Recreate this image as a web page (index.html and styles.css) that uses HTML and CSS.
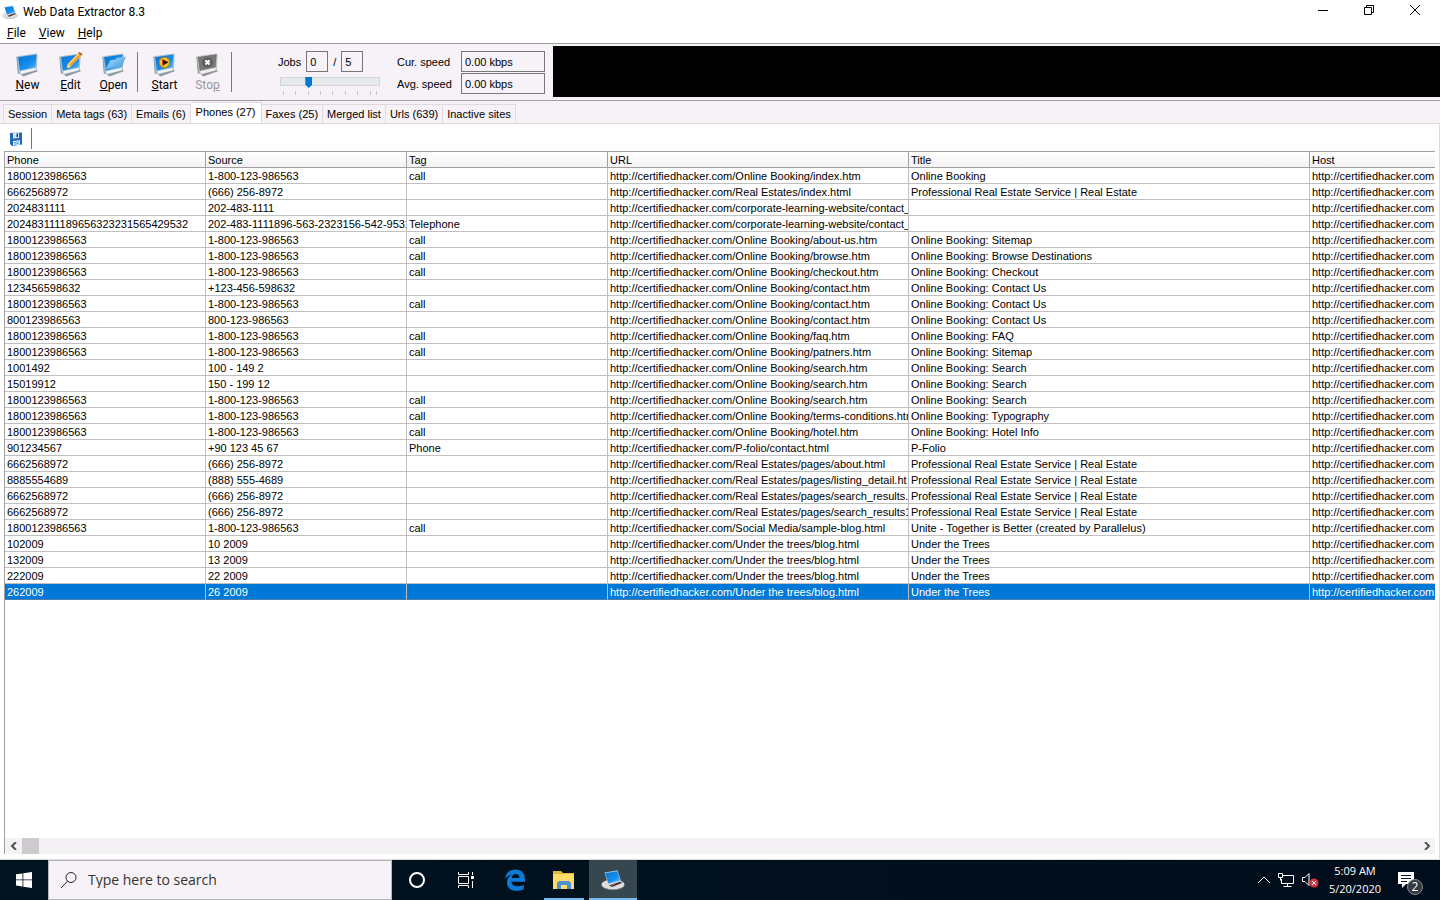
FILE: index.html
```html
<!DOCTYPE html>
<html lang="en">
  <head>
    <meta charset="utf-8" />
    <meta name="viewport" content="width=device-width, initial-scale=1.0" />
    <title>Web Data Extractor 8.3</title>
    <link rel="stylesheet" href="styles.css">
  </head>
  <body>
    <!-- Shared icon shapes -->
    <svg class="defs" aria-hidden="true">
      <defs>
        <linearGradient id="screen" x1="0" y1="0" x2="1" y2="1">
          <stop offset="0" stop-color="#0873d0" />
          <stop offset="0.6" stop-color="#168eee" />
          <stop offset="1" stop-color="#58bcff" />
        </linearGradient>
        <linearGradient id="folder" x1="0" y1="0" x2="1" y2="1">
          <stop offset="0" stop-color="#b8e2fa" />
          <stop offset="1" stop-color="#2c93e0" />
        </linearGradient>
        <symbol id="monitor" viewBox="0 0 24 24">
          <path d="M4 20l16-3.500 2 2-14 5z" fill="#8d98a3" />
          <path d="M2 4l19-2.500.8 1.500-1 14.500-15 4-2.500-1z" fill="#a9bfd0" />
          <path d="M2 4l1.700 17.200-1-.7L1.400 5z" fill="#6f90ab" />
          <path d="M5 18.500l15-3.200-.2 2.200L5.500 21.200z" fill="#eef4f8" />
          <path d="M3 5l17.500-2.500-.8 12L4.700 17.800z" fill="url(#screen)" />
        </symbol>
        <symbol id="app" viewBox="0 0 24 24">
          <ellipse cx="12" cy="16.500" rx="11.500" ry="5" fill="#e0dddb" />
          <path d="M.5 16.500c2 6.500 21 6.500 23 0 0 7.500-23 7.500-23 0z" fill="#98969b" />
          <path d="M3.500 4.500l13-2.200 3.500 10.500-13 3.400z" fill="#9acbef" />
          <path d="M4.200 5.300l12-2 3 9-11.700 3z" fill="url(#screen)" />
          <path d="M8 17.500l11-3.700 2.500 1-10.500 4.200z" fill="#35343b" />
          <path d="M10 17.500l4-1.500" stroke="#d4473c" />
        </symbol>
      </defs>
    </svg>

    <main class="window">
      <header class="title-bar">
        <svg class="app-icon"><use href="#app" /></svg>
        <h1>Web Data Extractor 8.3</h1>
        <div class="window-buttons">
          <button aria-label="Minimize"><svg viewBox="0 0 12 12"><path d="M1 6.500h10" /></svg></button>
          <button aria-label="Restore"><svg viewBox="0 0 12 12"><path d="M1.500 3.500h7v7h-7zM3.500 3.500v-2h7v7h-2" /></svg></button>
          <button aria-label="Close"><svg viewBox="0 0 12 12"><path d="M1 1l10 10M11 1L1 11" /></svg></button>
        </div>
      </header>

      <nav class="menu">
        <a href="#file"><u>F</u>ile</a>
        <a href="#view"><u>V</u>iew</a>
        <a href="#help"><u>H</u>elp</a>
      </nav>

      <section class="toolbar">
        <div class="actions">
          <button>
            <svg><use href="#monitor" /></svg>
            <span><u>N</u>ew</span>
          </button>
          <button>
            <svg viewBox="0 0 24 24">
              <use href="#monitor" />
              <path d="M8 16l1.500-4.500L19.500 1l3 2.500-10.500 11z" fill="#f3a02c" />
              <path d="M9.500 11.500L19.500 1l1 .8L10.700 12.500z" fill="#ffcf70" />
              <path d="M8 16l1.500-4.500 2.500 3z" fill="#f5dfb5" />
              <path d="M8 16l.6-1.700 1 1z" fill="#493420" />
              <path d="M19.500 1l1.200-1.200 3 2.400-1.200 1.300z" fill="#a06a42" />
            </svg>
            <span><u>E</u>dit</span>
          </button>
          <button>
            <svg viewBox="0 0 24 24">
              <use href="#monitor" />
              <path d="M4.500 16.500L9 8l5-.7 1.300-1.800L24 4.500 20 14z" fill="url(#folder)" />
            </svg>
            <span><u>O</u>pen</span>
          </button>
        </div>
        <div class="actions run">
          <button>
            <svg viewBox="0 0 24 24">
              <use href="#monitor" />
              <ellipse cx="12" cy="10" rx="5" ry="5" fill="#f7c52c" stroke="#b78018" />
              <path d="M10 7l6 2.800-5.600 3.200z" fill="#35120b" />
              <path d="M10 7l.4 6" stroke="#d83a20" />
            </svg>
            <span><u>S</u>tart</span>
          </button>
          <button disabled>
            <svg viewBox="0 0 24 24">
              <g class="gray">
                <use href="#monitor" />
                <path d="M3 5l17.500-2.500-.8 12L4.700 17.800z" fill="#777" />
                <circle cx="12" cy="10" r="5" fill="#5c5c5c" />
                <path d="M10 8l4 4M14 8l-4 4" stroke="#fff" stroke-width="2" />
              </g>
            </svg>
            <span>Sto<u>p</u></span>
          </button>
        </div>

        <div class="jobs">
          <div class="jobs-count">
            <label for="jobs">Jobs</label>
            <input id="jobs" type="text" value="0" />
            <span>/</span>
            <input type="text" value="5" aria-label="Maximum jobs" />
          </div>
          <input class="slider" type="range" min="1" max="16" value="5" aria-label="Job limit" />
          <svg class="ticks" viewBox="0 0 100 4">
            <path d="M3.500 0v4M15.500 0v4M28.500 0v4M40.500 0v4M52.500 0v4M65.500 0v4M77.500 0v4M90.500 0v4M96.500 0v4" />
          </svg>
        </div>

        <div class="speeds">
          <label for="cur">Cur. speed</label>
          <input id="cur" type="text" value="0.00 kbps" />
          <label for="avg">Avg. speed</label>
          <input id="avg" type="text" value="0.00 kbps" />
        </div>
        <div class="graph"></div>
      </section>

      <nav class="tabs">
        <button>Session</button>
        <button>Meta tags (63)</button>
        <button>Emails (6)</button>
        <button class="active">Phones (27)</button>
        <button>Faxes (25)</button>
        <button>Merged list</button>
        <button>Urls (639)</button>
        <button>Inactive sites</button>
      </nav>

      <section class="panel">
        <div class="panel-tools">
          <button aria-label="Save">
            <svg viewBox="0 0 14 14">
              <path d="M1 1l12-.5v12L3 14l-2-2z" fill="#2467b5" />
              <path d="M4 .8l6-.3v5.500L4 6.500z" fill="#d5e8f8" />
              <path d="M7.500 1.500l1.500-.1v3.600l-1.500.2z" fill="#173f7c" />
              <path d="M4 9l7-.8v4.500L4 13.500z" fill="#eaf5fc" />
              <path d="M5 10.500l5-.6M5 12.200l5-.6" stroke="#4ca5df" />
            </svg>
          </button>
        </div>

        <div class="grid">
          <table>
            <colgroup>
              <col class="col-phone" />
              <col class="col-source" />
              <col class="col-tag" />
              <col class="col-url" />
              <col class="col-title" />
              <col />
            </colgroup>
            <thead>
              <tr><th>Phone</th><th>Source</th><th>Tag</th><th>URL</th><th>Title</th><th>Host</th></tr>
            </thead>
            <tbody>
              <tr><td>1800123986563</td><td>1-800-123-986563</td><td>call</td><td>http://certifiedhacker.com/Online Booking/index.htm</td><td>Online Booking</td><td>http://certifiedhacker.com</td></tr>
              <tr><td>6662568972</td><td>(666) 256-8972</td><td></td><td>http://certifiedhacker.com/Real Estates/index.html</td><td>Professional Real Estate Service | Real Estate</td><td>http://certifiedhacker.com</td></tr>
              <tr><td>2024831111</td><td>202-483-1111</td><td></td><td>http://certifiedhacker.com/corporate-learning-website/contact_</td><td></td><td>http://certifiedhacker.com</td></tr>
              <tr><td>202483111189656323231565429532</td><td>202-483-1111896-563-2323156-542-9532</td><td>Telephone</td><td>http://certifiedhacker.com/corporate-learning-website/contact_</td><td></td><td>http://certifiedhacker.com</td></tr>
              <tr><td>1800123986563</td><td>1-800-123-986563</td><td>call</td><td>http://certifiedhacker.com/Online Booking/about-us.htm</td><td>Online Booking: Sitemap</td><td>http://certifiedhacker.com</td></tr>
              <tr><td>1800123986563</td><td>1-800-123-986563</td><td>call</td><td>http://certifiedhacker.com/Online Booking/browse.htm</td><td>Online Booking: Browse Destinations</td><td>http://certifiedhacker.com</td></tr>
              <tr><td>1800123986563</td><td>1-800-123-986563</td><td>call</td><td>http://certifiedhacker.com/Online Booking/checkout.htm</td><td>Online Booking: Checkout</td><td>http://certifiedhacker.com</td></tr>
              <tr><td>123456598632</td><td>+123-456-598632</td><td></td><td>http://certifiedhacker.com/Online Booking/contact.htm</td><td>Online Booking: Contact Us</td><td>http://certifiedhacker.com</td></tr>
              <tr><td>1800123986563</td><td>1-800-123-986563</td><td>call</td><td>http://certifiedhacker.com/Online Booking/contact.htm</td><td>Online Booking: Contact Us</td><td>http://certifiedhacker.com</td></tr>
              <tr><td>800123986563</td><td>800-123-986563</td><td></td><td>http://certifiedhacker.com/Online Booking/contact.htm</td><td>Online Booking: Contact Us</td><td>http://certifiedhacker.com</td></tr>
              <tr><td>1800123986563</td><td>1-800-123-986563</td><td>call</td><td>http://certifiedhacker.com/Online Booking/faq.htm</td><td>Online Booking: FAQ</td><td>http://certifiedhacker.com</td></tr>
              <tr><td>1800123986563</td><td>1-800-123-986563</td><td>call</td><td>http://certifiedhacker.com/Online Booking/patners.htm</td><td>Online Booking: Sitemap</td><td>http://certifiedhacker.com</td></tr>
              <tr><td>1001492</td><td>100 - 149 2</td><td></td><td>http://certifiedhacker.com/Online Booking/search.htm</td><td>Online Booking: Search</td><td>http://certifiedhacker.com</td></tr>
              <tr><td>15019912</td><td>150 - 199 12</td><td></td><td>http://certifiedhacker.com/Online Booking/search.htm</td><td>Online Booking: Search</td><td>http://certifiedhacker.com</td></tr>
              <tr><td>1800123986563</td><td>1-800-123-986563</td><td>call</td><td>http://certifiedhacker.com/Online Booking/search.htm</td><td>Online Booking: Search</td><td>http://certifiedhacker.com</td></tr>
              <tr><td>1800123986563</td><td>1-800-123-986563</td><td>call</td><td>http://certifiedhacker.com/Online Booking/terms-conditions.htm</td><td>Online Booking: Typography</td><td>http://certifiedhacker.com</td></tr>
              <tr><td>1800123986563</td><td>1-800-123-986563</td><td>call</td><td>http://certifiedhacker.com/Online Booking/hotel.htm</td><td>Online Booking: Hotel Info</td><td>http://certifiedhacker.com</td></tr>
              <tr><td>901234567</td><td>+90 123 45 67</td><td>Phone</td><td>http://certifiedhacker.com/P-folio/contact.html</td><td>P-Folio</td><td>http://certifiedhacker.com</td></tr>
              <tr><td>6662568972</td><td>(666) 256-8972</td><td></td><td>http://certifiedhacker.com/Real Estates/pages/about.html</td><td>Professional Real Estate Service | Real Estate</td><td>http://certifiedhacker.com</td></tr>
              <tr><td>8885554689</td><td>(888) 555-4689</td><td></td><td>http://certifiedhacker.com/Real Estates/pages/listing_detail.ht</td><td>Professional Real Estate Service | Real Estate</td><td>http://certifiedhacker.com</td></tr>
              <tr><td>6662568972</td><td>(666) 256-8972</td><td></td><td>http://certifiedhacker.com/Real Estates/pages/search_results.</td><td>Professional Real Estate Service | Real Estate</td><td>http://certifiedhacker.com</td></tr>
              <tr><td>6662568972</td><td>(666) 256-8972</td><td></td><td>http://certifiedhacker.com/Real Estates/pages/search_results1</td><td>Professional Real Estate Service | Real Estate</td><td>http://certifiedhacker.com</td></tr>
              <tr><td>1800123986563</td><td>1-800-123-986563</td><td>call</td><td>http://certifiedhacker.com/Social Media/sample-blog.html</td><td>Unite - Together is Better (created by Parallelus)</td><td>http://certifiedhacker.com</td></tr>
              <tr><td>102009</td><td>10 2009</td><td></td><td>http://certifiedhacker.com/Under the trees/blog.html</td><td>Under the Trees</td><td>http://certifiedhacker.com</td></tr>
              <tr><td>132009</td><td>13 2009</td><td></td><td>http://certifiedhacker.com/Under the trees/blog.html</td><td>Under the Trees</td><td>http://certifiedhacker.com</td></tr>
              <tr><td>222009</td><td>22 2009</td><td></td><td>http://certifiedhacker.com/Under the trees/blog.html</td><td>Under the Trees</td><td>http://certifiedhacker.com</td></tr>
              <tr class="selected"><td>262009</td><td>26 2009</td><td></td><td>http://certifiedhacker.com/Under the trees/blog.html</td><td>Under the Trees</td><td>http://certifiedhacker.com</td></tr>
            </tbody>
          </table>
          <div class="scrollbar">
            <button aria-label="Scroll left"><svg viewBox="0 0 8 8"><path d="M6 0L2 4l4 4" /></svg></button>
            <div class="thumb"></div>
            <button aria-label="Scroll right"><svg viewBox="0 0 8 8"><path d="M2 0l4 4-4 4" /></svg></button>
          </div>
        </div>
      </section>
    </main>

    <footer class="taskbar">
      <button class="start" aria-label="Start">
        <svg viewBox="0 0 16 16"><path d="M0 2.300l6.500-.9v6.100H0zM7.300 1.300L16 0v7.500H7.300zM0 8.300h6.500v6.200L0 13.600zM7.300 8.300H16V16l-8.700-1.300z" fill="#fff" /></svg>
      </button>
      <label class="search">
        <svg viewBox="0 0 18 18"><circle cx="11" cy="6.500" r="5" /><path d="M7.500 10.200L1 17" /></svg>
        <input type="text" placeholder="Type here to search" />
      </label>
      <button aria-label="Cortana">
        <svg class="icon-m" viewBox="0 0 18 18"><circle cx="9" cy="9" r="7" fill="none" stroke="#fff" stroke-width="2" /></svg>
      </button>
      <button aria-label="Task view">
        <svg class="icon-m" viewBox="0 0 18 18"><path d="M1.500 1v2.500h10V1M1.500 17v-2.500h10V17M1.500 5.500h10v7h-10zM15.500 1v3M15.500 10v7" fill="none" stroke="#fff" /><path d="M14 5h3v3h-3z" fill="#fff" /></svg>
      </button>
      <button aria-label="Edge">
        <svg class="icon-l" viewBox="0 0 24 24"><path d="M2 11C3 4.500 7 1.500 12.500 1.500 18.500 1.500 22 5.500 22 11v2.700H8.500c.2 3.300 3 4.600 6.200 4.600 2.300 0 4.300-.6 6-1.600v4.600c-2 1-4.300 1.500-7 1.500C7.500 22.800 4 19.500 4 14.500c0-3.500 1.800-6.300 5-7.700C6 7 3.800 8.500 2 11zM8.700 10h7.800c0-2.500-1.300-4-3.700-4-2.300 0-3.700 1.500-4.100 4z" fill="#0e7ad8" fill-rule="evenodd" /></svg>
      </button>
      <button aria-label="File Explorer">
        <span class="open"><svg class="icon-l" viewBox="0 0 24 24"><path d="M1 3h8l2 2h11v16H1z" fill="#e8b63a" /><path d="M1 6h21v15H1z" fill="#ffdc68" /><path d="M5 21v-6l2-2h10l2 2v6h-4v-4H9v4z" fill="#4b91d4" /></svg></span>
      </button>
      <button aria-label="Web Data Extractor">
        <span class="open current"><svg class="icon-l"><use href="#app" /></svg></span>
      </button>
      <div class="tray">
        <svg class="icon-s" viewBox="0 0 14 14"><path d="M1 10l6-6 6 6" fill="none" stroke="#fff" /></svg>
        <svg class="icon-m" viewBox="0 0 18 18"><path d="M6 4.500h10.500v8H4.500V8M10.500 12.500v3M6.500 15.500h8M1.500 2.500h4v4h-4zM3.500 6.500v3" fill="none" stroke="#fff" /></svg>
        <svg class="icon-m" viewBox="0 0 18 18"><path d="M1.500 6.500H4l4-4v12l-4-4H1.500z" fill="none" stroke="#fff" /><circle cx="13" cy="12" r="4.500" fill="#d43440" /><path d="M11 10l4 4M15 10l-4 4" stroke="#fff" /></svg>
        <div class="clock"><span>5:09 AM</span><span>5/20/2020</span></div>
        <button class="notifications" aria-label="Notifications">
          <svg viewBox="0 0 18 18"><path d="M1 1h16v12H9l-4 4v-4H1z" fill="#fff" /><path d="M4 4.500h10M4 7.500h10M4 10.500h6" stroke="#05111c" /></svg>
          <span class="badge">2</span>
        </button>
      </div>
    </footer>
  </body>
</html>
```

FILE: styles.css
```css
:root {
  --face: #f6f2f7;
  --line: #a0a0a0;
  --grid: #c0c0c0;
  --blue: #0078d7;
}

* {
  box-sizing: border-box;
  margin: 0;
  padding: 0;
}

body {
  display: flex;
  flex-direction: column;
  height: 100vh;
  overflow: hidden;
  background: #fff;
  color: #000;
  font-family: "Liberation Sans", Arial, sans-serif;
  font-size: 11px;
  line-height: 16px;
}

button,
input {
  font: inherit;
  color: inherit;
  border: none;
  background: none;
}

a {
  color: inherit;
  text-decoration: none;
}

svg {
  display: block;
  flex: none;
}

.defs {
  position: absolute;
  width: 0;
  height: 0;
}

.window {
  flex: 1;
  min-height: 0;
  display: flex;
  flex-direction: column;
}

/* Title bar and menu */
.title-bar,
.menu,
.actions {
  font-family: Roboto, "Liberation Sans", sans-serif;
  font-size: 12px;
}

.title-bar {
  display: flex;
  align-items: center;
  height: 24px;
  padding: 0 2px;
}

.title-bar h1 {
  margin-left: 5px;
  font-size: 12px;
  font-weight: 400;
}

.app-icon {
  width: 16px;
  height: 16px;
}

.window-buttons {
  display: flex;
  margin-left: auto;
}

.window-buttons button {
  display: flex;
  justify-content: center;
  width: 46px;
  padding-bottom: 4px;
}

.window-buttons svg {
  width: 12px;
  height: 12px;
  fill: none;
  stroke: #000;
}

.menu {
  display: flex;
  gap: 13px;
  height: 20px;
  padding: 1px 7px;
  border-bottom: 1px solid var(--line);
}

/* Toolbar */
.toolbar {
  display: flex;
  height: 57px;
  background: var(--face);
  border-bottom: 1px solid var(--line);
}

.actions {
  display: flex;
  align-self: center;
  height: 40px;
  padding: 0 2px 0 6px;
  border-right: 1px solid #777;
}

.actions.run {
  padding-left: 5px;
}

.actions button {
  display: flex;
  flex-direction: column;
  align-items: center;
  width: 43px;
}

.actions svg {
  width: 25px;
  height: 25px;
}

.actions button:disabled {
  color: #9a979c;
}

.gray {
  filter: grayscale(1);
}

.jobs {
  width: 104px;
  margin-left: 46px;
  padding-top: 7px;
}

.jobs-count {
  display: flex;
  align-items: center;
  gap: 5px;
}

.jobs-count input {
  width: 22px;
  height: 21px;
  padding: 0 3px;
  border: 1px solid #777;
}

.slider {
  display: block;
  appearance: none;
  width: 100px;
  height: 9px;
  margin: 5px 0 5px 2px;
  background: #e7eaea;
  border: 1px solid #d6d6d6;
}

.slider::-webkit-slider-thumb {
  appearance: none;
  width: 7px;
  height: 11px;
  margin-top: 2px;
  background: var(--blue);
  clip-path: polygon(0 0, 100% 0, 100% 70%, 50% 100%, 0 70%);
}

.ticks {
  width: 100px;
  height: 4px;
  margin-left: 2px;
  stroke: #c4c4c4;
}

.speeds {
  display: grid;
  grid-template-columns: 64px 84px;
  align-content: start;
  align-items: center;
  gap: 1px 0;
  margin-left: 15px;
  padding-top: 7px;
}

.speeds input {
  width: 84px;
  height: 21px;
  padding: 0 3px;
  border: 1px solid #777;
}

.graph {
  flex: 1;
  height: 51px;
  margin: 2px 0 0 8px;
  background: #000;
}

/* Tabs */
.tabs {
  display: flex;
  height: 22px;
  padding: 3px 3px 0;
  background: var(--face);
}

.tabs button {
  padding: 0 4px;
  border: 1px solid #dedade;
  border-left: none;
  border-bottom: none;
}

.tabs button:first-child {
  border-left: 1px solid #dedade;
}

.tabs .active {
  margin-top: -2px;
  padding: 0 5px 2px;
  background: #fff;
}

/* Result grid */
.panel {
  flex: 1;
  min-height: 0;
  display: flex;
  flex-direction: column;
  padding: 0 4px 5px;
  border: 1px solid #dedade;
  border-left: none;
}

.panel-tools {
  display: flex;
  height: 27px;
  padding-top: 4px;
}

.panel-tools button {
  display: flex;
  align-items: center;
  width: 28px;
  height: 21px;
  padding-left: 5px;
  border-right: 1px solid #777;
}

.panel-tools svg {
  width: 14px;
  height: 14px;
}

.grid {
  flex: 1;
  min-height: 0;
  display: flex;
  flex-direction: column;
  border-top: 1px solid var(--line);
  border-left: 1px solid var(--line);
}

table {
  width: 100%;
  table-layout: fixed;
  border-collapse: separate;
  border-spacing: 0;
}

.col-phone,
.col-source,
.col-tag {
  width: 201px;
}

.col-url {
  width: 301px;
}

.col-title {
  width: 401px;
}

th,
td {
  height: 16px;
  padding: 1px 0 0 2px;
  border-right: 1px solid var(--grid);
  border-bottom: 1px solid var(--grid);
  font-weight: 400;
  line-height: 14px;
  text-align: left;
  white-space: nowrap;
  overflow: hidden;
}

th {
  background: linear-gradient(#fff, #f3f1f3);
  border-color: var(--line);
}

th:last-child,
td:last-child {
  border-right: none;
}

.selected td {
  background: var(--blue);
  border-bottom-color: #4f7ea6;
  color: #fff;
}

.scrollbar {
  display: flex;
  height: 16px;
  margin-top: auto;
  background: #f5f2f5;
}

.scrollbar button {
  display: flex;
  align-items: center;
  justify-content: center;
  width: 17px;
}

.scrollbar button:last-child {
  margin-left: auto;
}

.scrollbar svg {
  width: 8px;
  height: 8px;
  fill: none;
  stroke: #505050;
  stroke-width: 2;
}

.thumb {
  width: 17px;
  background: #cdcbcd;
}

/* Taskbar */
.taskbar {
  display: flex;
  height: 40px;
  background: linear-gradient(90deg, #00141f, #020d1b);
  color: #fff;
  font-family: "Open Sans", "Noto Sans", sans-serif;
}

.taskbar button {
  display: flex;
  align-items: center;
  justify-content: center;
  width: 49px;
}

.taskbar .start {
  width: 48px;
}

.start svg {
  width: 16px;
  height: 16px;
}

.search {
  display: flex;
  align-items: center;
  gap: 10px;
  width: 344px;
  padding: 0 11px;
  background: var(--face);
  border: 1px solid #b8b8bc;
}

.search svg {
  width: 18px;
  height: 18px;
  fill: none;
  stroke: #222;
}

.search input {
  flex: 1;
  color: #222;
  font-size: 14px;
}

.search input::placeholder {
  color: #333;
}

.icon-s {
  width: 14px;
  height: 14px;
}

.icon-m {
  width: 18px;
  height: 18px;
}

.icon-l {
  width: 24px;
  height: 24px;
}

.open {
  display: flex;
  align-items: center;
  justify-content: center;
  width: 40px;
  height: 40px;
  padding-top: 2px;
  border-bottom: 2px solid #76b9ed;
}

.current {
  width: 48px;
  background: #36474f;
}

.tray {
  display: flex;
  align-items: center;
  gap: 6px;
  margin-left: auto;
  padding-right: 17px;
}

.clock {
  display: flex;
  flex-direction: column;
  width: 60px;
  line-height: 18px;
  text-align: center;
}

.taskbar .notifications {
  position: relative;
  width: 26px;
  height: 40px;
  margin-left: 6px;
  justify-content: flex-start;
}

.notifications svg {
  width: 18px;
  height: 18px;
}

.badge {
  position: absolute;
  right: 0;
  bottom: 5px;
  width: 16px;
  height: 16px;
  border: 1px solid #888;
  border-radius: 50%;
  background: #343a40;
  font-size: 12px;
  line-height: 14px;
  text-align: center;
}
```
